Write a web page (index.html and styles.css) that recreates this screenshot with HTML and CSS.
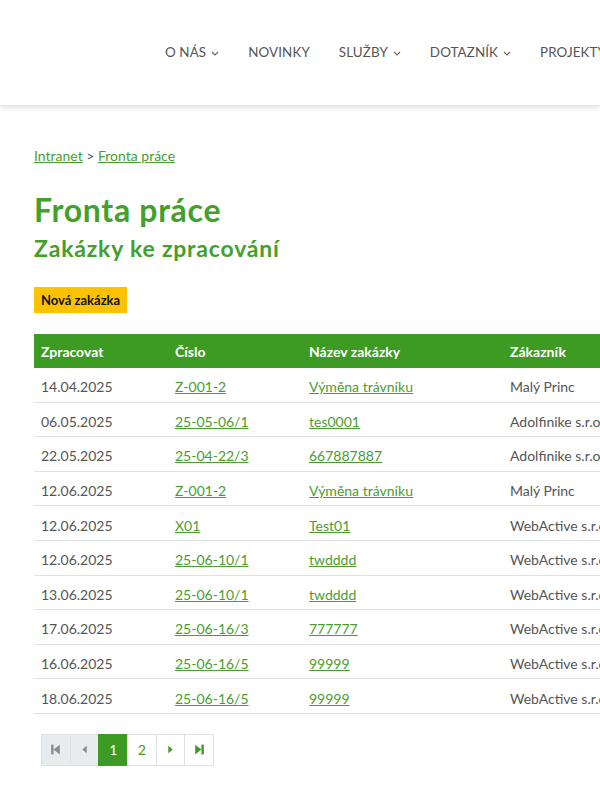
FILE: index.html
```html
<!DOCTYPE html>
<html lang="cs">
<head>
<meta charset="utf-8">
<title>Fronta práce</title>
<link rel="stylesheet" href="styles.css">
</head>
<body>
<header class="site-header">
  <nav class="main-nav">
    <a class="nav-item">O NÁS <span class="chev"><svg width="8" height="5" viewBox="0 0 8 5"><path d="M1 1l3 3 3-3" fill="none" stroke="#666" stroke-width="1.1"/></svg></span></a>
    <a class="nav-item">NOVINKY</a>
    <a class="nav-item">SLUŽBY <span class="chev"><svg width="8" height="5" viewBox="0 0 8 5"><path d="M1 1l3 3 3-3" fill="none" stroke="#666" stroke-width="1.1"/></svg></span></a>
    <a class="nav-item">DOTAZNÍK <span class="chev"><svg width="8" height="5" viewBox="0 0 8 5"><path d="M1 1l3 3 3-3" fill="none" stroke="#666" stroke-width="1.1"/></svg></span></a>
    <a class="nav-item">PROJEKTY</a>
  </nav>
</header>
<main class="content">
  <div class="breadcrumb"><a href="#">Intranet</a> &gt; <a href="#">Fronta práce</a></div>
  <h1 class="title">Fronta práce</h1>
  <h2 class="subtitle">Zakázky ke zpracování</h2>
  <a class="btn-new" href="#">Nová zakázka</a>
  <table class="orders">
    <thead>
      <tr><th class="c1">Zpracovat</th><th class="c2">Číslo</th><th class="c3">Název zakázky</th><th class="c4">Zákazník</th></tr>
    </thead>
    <tbody>
      <tr><td>14.04.2025</td><td><a href="#">Z-001-2</a></td><td><a href="#">Výměna trávníku</a></td><td>Malý Princ</td></tr>
      <tr><td>06.05.2025</td><td><a href="#">25-05-06/1</a></td><td><a href="#">tes0001</a></td><td>Adolfinike s.r.o.</td></tr>
      <tr><td>22.05.2025</td><td><a href="#">25-04-22/3</a></td><td><a href="#">667887887</a></td><td>Adolfinike s.r.o.</td></tr>
      <tr><td>12.06.2025</td><td><a href="#">Z-001-2</a></td><td><a href="#">Výměna trávníku</a></td><td>Malý Princ</td></tr>
      <tr><td>12.06.2025</td><td><a href="#">X01</a></td><td><a href="#">Test01</a></td><td>WebActive s.r.o.</td></tr>
      <tr><td>12.06.2025</td><td><a href="#">25-06-10/1</a></td><td><a href="#">twdddd</a></td><td>WebActive s.r.o.</td></tr>
      <tr><td>13.06.2025</td><td><a href="#">25-06-10/1</a></td><td><a href="#">twdddd</a></td><td>WebActive s.r.o.</td></tr>
      <tr><td>17.06.2025</td><td><a href="#">25-06-16/3</a></td><td><a href="#">777777</a></td><td>WebActive s.r.o.</td></tr>
      <tr><td>16.06.2025</td><td><a href="#">25-06-16/5</a></td><td><a href="#">99999</a></td><td>WebActive s.r.o.</td></tr>
      <tr><td>18.06.2025</td><td><a href="#">25-06-16/5</a></td><td><a href="#">99999</a></td><td>WebActive s.r.o.</td></tr>
    </tbody>
  </table>
  <div class="pager">
    <span class="pg disabled"><svg width="13" height="13" viewBox="0 0 12 12"><rect x="2" y="1.5" width="2.2" height="9" fill="#8a8a8a"/><path d="M10 1.5v9L4.2 6z" fill="#8a8a8a"/></svg></span>
    <span class="pg disabled"><svg width="13" height="13" viewBox="0 0 12 12"><path d="M8 2.5v7L4 6z" fill="#8a8a8a"/></svg></span>
    <span class="pg active">1</span>
    <span class="pg">2</span>
    <span class="pg"><svg width="13" height="13" viewBox="0 0 12 12"><path d="M4 2.5v7L8 6z" fill="#3d9a23"/></svg></span>
    <span class="pg"><svg width="13" height="13" viewBox="0 0 12 12"><path d="M2 1.5v9L7.8 6z" fill="#3d9a23"/><rect x="7.8" y="1.5" width="2.2" height="9" fill="#3d9a23"/></svg></span>
  </div>
</main>
</body>
</html>
```
FILE: styles.css
```css
html, body {
  margin: 0;
  padding: 0;
  background: #fff;
  overflow: hidden;
}
body {
  font-family: "Lato", "Open Sans", sans-serif;
  color: #555;
  width: 600px;
}
a { color: #4a9e2f; }

.site-header {
  height: 105px;
  background: #fff;
  box-shadow: 0 2px 6px rgba(0,0,0,0.12);
  border-bottom: 1px solid #e6e6e6;
  overflow: hidden;
  position: relative;
}
.main-nav {
  display: flex;
  gap: 29px;
  padding: 44px 0 0 165px;
  white-space: nowrap;
}
.nav-item {
  color: #555;
  font-size: 13.4px;
  letter-spacing: 0.1px;
  text-decoration: none;
  display: flex;
  align-items: center;
  gap: 5px;
  line-height: 17px;
}
.chev { display: inline-flex; margin-top: 1px; }

.content {
  padding: 40px 0 0 34px;
}
.breadcrumb {
  font-size: 14px;
  color: #555;
  line-height: 20px;
}
.breadcrumb a { color: #4a9e2f; }

.title {
  margin: 25px 0 0;
  font-size: 32px;
  font-weight: 700;
  color: #43a02a;
  letter-spacing: 0.7px;
  line-height: 38px;
}
.subtitle {
  margin: 4px 0 0;
  font-size: 23px;
  font-weight: 700;
  color: #43a02a;
  letter-spacing: 0.8px;
  line-height: 30px;
}
.btn-new {
  display: inline-block;
  margin-top: 24px;
  background: #fcc200;
  color: #111;
  font-size: 13px;
  font-weight: 700;
  text-decoration: none;
  padding: 5px 7px;
  line-height: 16px;
}

.orders {
  margin-top: 21px;
  border-collapse: collapse;
  width: 760px;
  font-size: 14px;
}
.orders th {
  background: #3d9a23;
  color: #fff;
  text-align: left;
  font-weight: 700;
  height: 34px;
  padding: 0 7px;
}
.orders th.c1, .orders th.c2 { width: 120px; }
.orders th.c3 { width: 187px; }
.orders td {
  height: 29.6px;
  padding: 4px 7px 0;
  border-bottom: 1px solid #dee2e6;
  color: #555;
}
.orders td a { color: #4a9e2f; }

.pager {
  display: flex;
  margin: 20px 0 0 7px;
}
.pg {
  width: 27.7px;
  height: 30px;
  border: 1px solid #dee2e6;
  margin-left: -1px;
  display: flex;
  align-items: center;
  justify-content: center;
  font-size: 14px;
  color: #3d9a23;
  background: #fff;
}
.pg:first-child { margin-left: 0; }
.pg.disabled { background: #e9ecef; }
.pg.active { background: #3d9a23; color: #fff; border-color: #3d9a23; }
```
